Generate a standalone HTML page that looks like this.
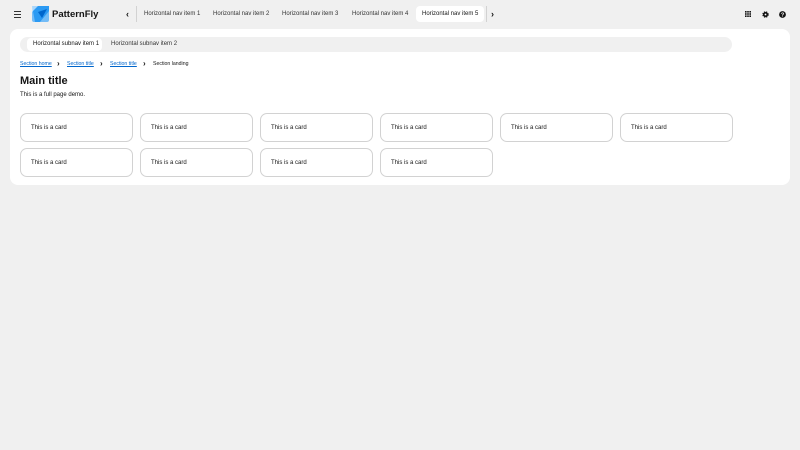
<!DOCTYPE html>
<html><head><style>
*{box-sizing:border-box;margin:0;padding:0}
body{width:800px;height:450px;background:#f0f0f0;font-family:"Liberation Sans",sans-serif;color:#151515;position:relative;overflow:hidden}
.a{position:absolute}
.t{font-size:6px;white-space:nowrap}
.panel{left:10px;top:29px;width:780px;height:156px;background:#fff;border-radius:8px}
.card{position:absolute;width:113px;height:29px;border:1px solid #d2d2d2;border-radius:7px;background:#fff;font-size:6px;padding-left:10px;padding-top:11px;line-height:6px}
.bc{font-size:5.2px;color:#0066cc;text-decoration:underline}
.ch{font-size:9px;font-weight:bold;line-height:9px}
</style></head><body>
<div class="a" style="left:14px;top:11px;width:7px">
<div style="height:1px;background:#333;margin-bottom:2px"></div><div style="height:1px;background:#333;margin-bottom:2px"></div><div style="height:1px;background:#333"></div></div>
<svg class="a" style="left:32px;top:6px" width="17" height="16" viewBox="0 0 17 16"><rect width="17" height="16" rx="2" fill="#73bcf7"/><path d="M0 0H17V5L8 16H3Z" fill="#2b9af3"/><path d="M6 6L15 3L10 12Z" fill="#0066cc"/><path d="M0 0H6L0 6Z" fill="#fff" opacity=".6"/></svg>
<div class="a" style="left:52px;top:9px;font-size:9.5px;font-weight:bold">PatternFly</div>
<div class="a ch" style="left:126px;top:10px">‹</div>
<div class="a" style="left:136px;top:6px;width:1px;height:16px;background:#d2d2d2"></div>
<div class="a t" style="left:144px;top:11px;color:#333">Horizontal nav item 1</div>
<div class="a t" style="left:213px;top:11px;color:#333">Horizontal nav item 2</div>
<div class="a t" style="left:282px;top:11px;color:#333">Horizontal nav item 3</div>
<div class="a t" style="left:352px;top:11px;color:#333">Horizontal nav item 4</div>
<div class="a" style="left:416px;top:6px;width:68px;height:16px;background:#fff;border-radius:4px"></div>
<div class="a t" style="left:422px;top:11px">Horizontal nav item 5</div>
<div class="a" style="left:486px;top:6px;width:1px;height:16px;background:#d2d2d2"></div>
<div class="a ch" style="left:491px;top:10px">›</div>
<svg class="a" style="left:745px;top:11px" width="6" height="6"><g fill="#151515"><rect x="0" y="0" width="1.6" height="1.6"/><rect x="2.2" y="0" width="1.6" height="1.6"/><rect x="4.4" y="0" width="1.6" height="1.6"/><rect x="0" y="2.2" width="1.6" height="1.6"/><rect x="2.2" y="2.2" width="1.6" height="1.6"/><rect x="4.4" y="2.2" width="1.6" height="1.6"/><rect x="0" y="4.4" width="1.6" height="1.6"/><rect x="2.2" y="4.4" width="1.6" height="1.6"/><rect x="4.4" y="4.4" width="1.6" height="1.6"/></g></svg>
<svg class="a" style="left:762px;top:11px" width="7" height="7" viewBox="0 0 7 7"><circle cx="3.5" cy="3.5" r="2.5" fill="#151515" stroke="#151515" stroke-width="1.4" stroke-dasharray="1.2 0.8"/><circle cx="3.5" cy="3.5" r="0.9" fill="#fff"/></svg>
<svg class="a" style="left:779px;top:11px" width="7" height="7" viewBox="0 0 7 7"><circle cx="3.5" cy="3.5" r="3.4" fill="#151515"/><text x="3.5" y="5.6" font-size="5.5" font-weight="bold" fill="#fff" text-anchor="middle" font-family="Liberation Sans">?</text></svg>
<div class="a panel"></div>
<div class="a" style="left:20px;top:37px;width:712px;height:15px;background:#f0f0f0;border-radius:8px"></div>
<div class="a" style="left:27px;top:38px;width:75px;height:13px;background:#fff;border-radius:4px"></div>
<div class="a t" style="left:33px;top:41px">Horizontal subnav item 1</div>
<div class="a t" style="left:111px;top:41px;color:#333">Horizontal subnav item 2</div>
<div class="a bc" style="left:20px;top:61px">Section home</div>
<div class="a ch" style="left:57px;top:59px;font-size:8px">›</div>
<div class="a bc" style="left:67px;top:61px">Section title</div>
<div class="a ch" style="left:100px;top:59px;font-size:8px">›</div>
<div class="a bc" style="left:110px;top:61px">Section title</div>
<div class="a ch" style="left:143px;top:59px;font-size:8px">›</div>
<div class="a" style="left:153px;top:61px;font-size:5.2px">Section landing</div>
<div class="a" style="left:20px;top:75px;font-size:11px;font-weight:bold">Main title</div>
<div class="a t" style="left:20px;top:92px">This is a full page demo.</div>
<div class="card" style="left:20px;top:113px">This is a card</div>
<div class="card" style="left:140px;top:113px">This is a card</div>
<div class="card" style="left:260px;top:113px">This is a card</div>
<div class="card" style="left:380px;top:113px">This is a card</div>
<div class="card" style="left:500px;top:113px">This is a card</div>
<div class="card" style="left:620px;top:113px">This is a card</div>
<div class="card" style="left:20px;top:148px">This is a card</div>
<div class="card" style="left:140px;top:148px">This is a card</div>
<div class="card" style="left:260px;top:148px">This is a card</div>
<div class="card" style="left:380px;top:148px">This is a card</div>
</body></html>
